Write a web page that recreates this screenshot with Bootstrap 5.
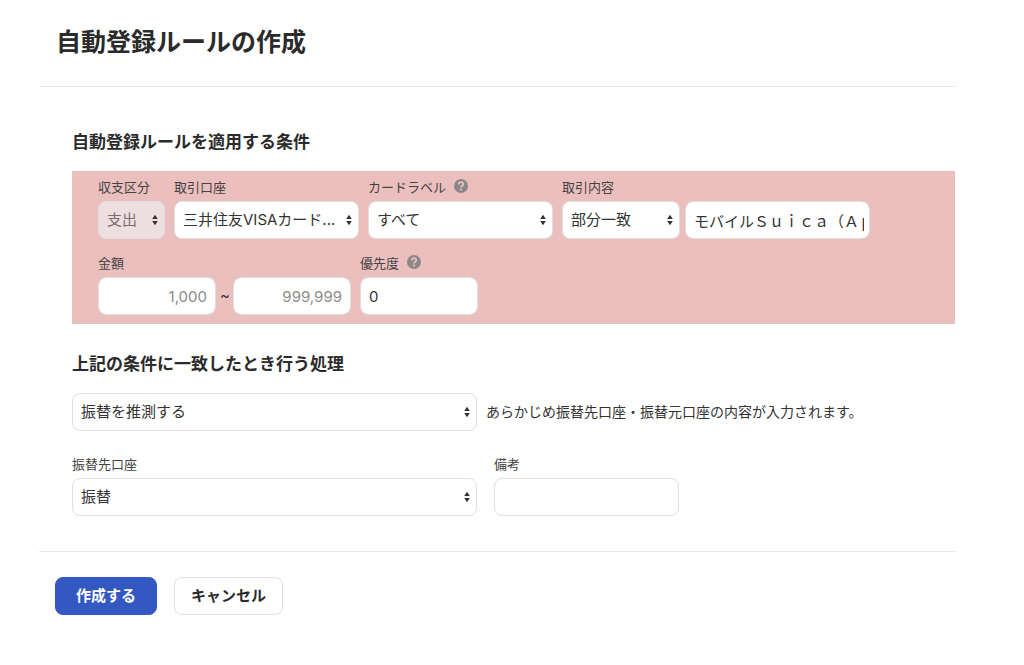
<!DOCTYPE html>
<html lang="ja">
<head>
<meta charset="utf-8">
<meta name="viewport" content="width=device-width, initial-scale=1">
<title>自動登録ルールの作成</title>
<link href="https://cdn.jsdelivr.net/npm/bootstrap@5.3.0/dist/css/bootstrap.min.css" rel="stylesheet">
<style>
  body { font-family: Inter, "Noto Sans CJK JP", sans-serif; font-size: 15px; color: #333; background: #fff; }
  .page { padding: 24px 69px 50px 39px; }
  .page-title { font-size: 25px; line-height: 36px; font-weight: 700; color: #2b2b2b; padding-left: 17px; margin-bottom: 26px; }
  .rule-form { border-top: 1px solid #e6e8e8; }
  .form-body { padding: 43px 0 35px 33px; }
  .section-title { font-size: 17px; line-height: 24px; font-weight: 700; color: #2b2b2b; margin: 0; }
  .conditions { background: #ecbfbf; margin: 17px 0 28px; padding: 6px 26px 9px; row-gap: 14px; }
  .field-label { font-size: 13px; line-height: 20px; margin-bottom: 4px; color: #444; }
  .gap-field { column-gap: 9px; }
  .gap-tight { column-gap: 5px; }
  .gap-range { column-gap: 4px; }
  .gap-wide { column-gap: 17px; row-gap: 16px; }
  .form-control, .form-select {
    height: 38px; padding: 0 8px; font-size: 15px; line-height: 24px; color: #333;
    border: 1px solid #dedfdf; border-radius: 8px; background-color: #fff;
  }
  .form-select {
    padding-right: 18px;
    background-image: url("data:image/svg+xml,%3Csvg xmlns='http://www.w3.org/2000/svg' viewBox='0 0 6 12'%3E%3Cpath fill='%23333' d='M3 .8 5.8 5H.2zM3 11.2.2 7h5.6z'/%3E%3C/svg%3E");
    background-size: 6px 12px; background-position: right 6px center;
  }
  .form-select:disabled { background-color: #eddedf; color: #786e6f; opacity: 1; }
  .form-control::placeholder { color: #8b8b8b; }
  .w-kind { width: 67px; }
  .w-short { width: 118px; }
  .w-medium { width: 185px; }
  .w-long { width: 405px; max-width: 100%; }
  .clip-text { padding-right: 5px; }
  .range-mark { width: 9px; text-align: center; }
  .help { width: 14px; height: 14px; line-height: 0; margin: 2px 0 0 8px; }
  .action { margin-top: 17px; }
  .details { margin-top: 23px; }
  .hint { font-size: 14px; line-height: 24px; }
  .form-foot { border-top: 1px solid #e6e8e8; padding: 25px 16px 0; gap: 17px; }
  .form-foot .btn { height: 38px; padding: 0 16px; font-size: 15px; font-weight: 700; border-radius: 8px; }
  .form-foot .btn-create { padding: 0 20px; --bs-btn-color: #fff; --bs-btn-bg: #3358c2; --bs-btn-border-color: #3358c2; --bs-btn-hover-color: #fff; --bs-btn-hover-bg: #284aaa; }
  .btn-cancel { --bs-btn-color: #2b2b2b; --bs-btn-bg: #fff; --bs-btn-border-color: #dedfdf; --bs-btn-hover-bg: #f5f5f5; }
</style>
</head>
<body>
<main class="page">
  <h1 class="page-title">自動登録ルールの作成</h1>
  <form class="rule-form">
    <div class="form-body">
      <h2 class="section-title">自動登録ルールを適用する条件</h2>
      <div class="conditions d-flex flex-column">
        <div class="d-flex flex-wrap gap-field">
          <div class="w-kind">
            <label class="field-label d-block" for="kind">収支区分</label>
            <select class="form-select" id="kind" disabled><option>支出</option></select>
          </div>
          <div class="w-medium">
            <label class="field-label d-block" for="account">取引口座</label>
            <select class="form-select" id="account"><option>三井住友VISAカード...</option></select>
          </div>
          <div class="w-medium">
            <div class="d-flex align-items-start">
              <label class="field-label" for="cardLabel">カードラベル</label>
              <button type="button" class="help btn p-0 border-0" aria-label="カードラベルの説明">
                <svg width="14" height="14" viewBox="0 0 14 14" aria-hidden="true"><circle cx="7" cy="7" r="7" fill="#8c8788"/><path d="M4.8 5.3C4.8 3.9 5.8 3.2 7 3.2s2.2.8 2.2 2C9.2 6.7 7 6.7 7 8.5" fill="none" stroke="#ecbfbf" stroke-width="1.8"/><circle cx="7" cy="10.6" r="1.1" fill="#ecbfbf"/></svg>
              </button>
            </div>
            <select class="form-select" id="cardLabel"><option>すべて</option></select>
          </div>
          <div>
            <label class="field-label d-block" for="match">取引内容</label>
            <div class="d-flex gap-tight">
              <select class="form-select w-short" id="match"><option>部分一致</option></select>
              <input type="text" class="form-control w-medium clip-text" aria-label="取引内容のキーワード" value="モバイルＳｕｉｃａ（Ａｐｐｌｅ　Ｐａｙ）">
            </div>
          </div>
        </div>
        <div class="d-flex flex-wrap gap-field">
          <div>
            <label class="field-label d-block" for="amountMin">金額</label>
            <div class="d-flex align-items-center gap-range">
              <input type="text" class="form-control w-short text-end" id="amountMin" placeholder="1,000">
              <span class="range-mark">~</span>
              <input type="text" class="form-control w-short text-end" aria-label="金額の上限" placeholder="999,999">
            </div>
          </div>
          <div class="w-short">
            <div class="d-flex align-items-start">
              <label class="field-label" for="priority">優先度</label>
              <button type="button" class="help btn p-0 border-0" aria-label="優先度の説明">
                <svg width="14" height="14" viewBox="0 0 14 14" aria-hidden="true"><circle cx="7" cy="7" r="7" fill="#8c8788"/><path d="M4.8 5.3C4.8 3.9 5.8 3.2 7 3.2s2.2.8 2.2 2C9.2 6.7 7 6.7 7 8.5" fill="none" stroke="#ecbfbf" stroke-width="1.8"/><circle cx="7" cy="10.6" r="1.1" fill="#ecbfbf"/></svg>
              </button>
            </div>
            <input type="text" class="form-control" id="priority" value="0">
          </div>
        </div>
      </div>

      <h2 class="section-title" id="actionTitle">上記の条件に一致したとき行う処理</h2>
      <div class="action d-flex flex-wrap align-items-center gap-field">
        <select class="form-select w-long" aria-labelledby="actionTitle"><option>振替を推測する</option></select>
        <span class="hint">あらかじめ振替先口座・振替元口座の内容が入力されます。</span>
      </div>
      <div class="details d-flex flex-wrap gap-wide">
        <div class="w-long">
          <label class="field-label d-block" for="transfer">振替先口座</label>
          <select class="form-select" id="transfer"><option>振替</option></select>
        </div>
        <div class="w-medium">
          <label class="field-label d-block" for="note">備考</label>
          <input type="text" class="form-control" id="note">
        </div>
      </div>
    </div>
    <div class="form-foot d-flex flex-wrap">
      <button type="submit" class="btn btn-create">作成する</button>
      <button type="button" class="btn btn-cancel">キャンセル</button>
    </div>
  </form>
</main>
<script src="https://cdn.jsdelivr.net/npm/bootstrap@5.3.0/dist/js/bootstrap.bundle.min.js"></script>
</body>
</html>
